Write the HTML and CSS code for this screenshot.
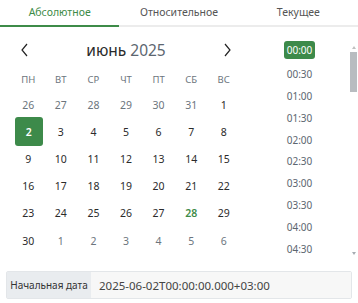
FILE: index.html
```html
<!DOCTYPE html>
<html lang="ru">
<head>
  <meta charset="UTF-8">
  <title>Выбор даты</title>
  <link rel="stylesheet" href="styles.css">
</head>
<body>
  <div class="tabs">
    <div class="tab active">Абсолютное</div>
    <div class="tab">Относительное</div>
    <div class="tab">Текущее</div>
  </div>

  <div class="picker">
    <div class="calendar">
      <div class="cal-header">
        <span class="nav">
          <svg width="9" height="14" viewBox="0 0 9 14"><path d="M7 1 L2 7 L7 13" fill="none" stroke="#222" stroke-width="1.2"/></svg>
        </span>
        <span class="month">июнь <span class="year">2025</span></span>
        <span class="nav">
          <svg width="9" height="14" viewBox="0 0 9 14"><path d="M2 1 L7 7 L2 13" fill="none" stroke="#222" stroke-width="1.2"/></svg>
        </span>
      </div>
      <div class="weekdays">
        <span>ПН</span><span>ВТ</span><span>СР</span><span>ЧТ</span><span>ПТ</span><span>СБ</span><span>ВС</span>
      </div>
      <div class="days">
        <span class="other">26</span><span class="other">27</span><span class="other">28</span><span class="other">29</span><span class="other">30</span><span class="other">31</span><span>1</span>
        <span><b class="selected">2</b></span><span>3</span><span>4</span><span>5</span><span>6</span><span>7</span><span>8</span>
        <span>9</span><span>10</span><span>11</span><span>12</span><span>13</span><span>14</span><span>15</span>
        <span>16</span><span>17</span><span>18</span><span>19</span><span>20</span><span>21</span><span>22</span>
        <span>23</span><span>24</span><span>25</span><span>26</span><span>27</span><span class="today">28</span><span>29</span>
        <span>30</span><span class="other">1</span><span class="other">2</span><span class="other">3</span><span class="other">4</span><span class="other">5</span><span class="other">6</span>
      </div>
    </div>

    <div class="times">
      <div class="time selected">00:00</div>
      <div class="time">00:30</div>
      <div class="time">01:00</div>
      <div class="time">01:30</div>
      <div class="time">02:00</div>
      <div class="time">02:30</div>
      <div class="time">03:00</div>
      <div class="time">03:30</div>
      <div class="time">04:00</div>
      <div class="time">04:30</div>
    </div>

    <div class="scrollbar">
      <span class="arrow up"></span>
      <div class="track"><div class="thumb"></div></div>
      <span class="arrow down"></span>
    </div>
  </div>

  <div class="date-field">
    <div class="label">Начальная дата</div>
    <div class="value">2025-06-02T00:00:00.000+03:00</div>
  </div>
</body>
</html>
```

FILE: styles.css
```css
body {
  margin: 0;
  width: 358px;
  height: 303px;
  overflow: hidden;
  background-color: #fff;
  font-family: "Noto Sans", "Open Sans", sans-serif;
  color: #212529;
}

.tabs {
  display: grid;
  grid-template-columns: repeat(3, 1fr);
  border-bottom: 2px solid #ececec;
}

.tab {
  height: 25px;
  line-height: 25px;
  text-align: center;
  font-size: 10.5px;
  color: #555;
  margin-bottom: -2px;
  border-bottom: 2px solid transparent;
}

.tab.active {
  color: #3d8b48;
  border-bottom-color: #3d8b48;
}

.picker {
  display: flex;
  height: 243px;
}

.calendar {
  width: 228px;
  margin-left: 12px;
  padding-top: 10px;
}

.cal-header {
  display: flex;
  align-items: center;
  justify-content: space-between;
  height: 26px;
  padding: 0 8px;
}

.nav {
  display: flex;
  width: 9px;
  height: 14px;
}

.month {
  font-size: 15.5px;
  color: #2a2a2a;
}

.year {
  color: #5c6670;
}

.weekdays {
  display: grid;
  grid-template-columns: repeat(7, 1fr);
  margin-top: 6px;
  height: 22px;
  line-height: 22px;
  text-align: center;
  font-size: 9.5px;
  color: #6c757d;
}

.days {
  display: grid;
  grid-template-columns: repeat(7, 1fr);
  grid-auto-rows: 27.2px;
  font-size: 10.5px;
  color: #2b2b2b;
}

.days span {
  display: flex;
  align-items: center;
  justify-content: center;
}

.days .other {
  color: #6c757d;
}

.days .today {
  color: #3d8b48;
  font-weight: 600;
}

.selected {
  background-color: #3d8a4a;
  color: #fff;
  border-radius: 3px;
}

.days .selected {
  display: flex;
  align-items: center;
  justify-content: center;
  width: 28px;
  height: 29px;
  margin-left: 1px;
  font-weight: 600;
}

.times {
  width: 31px;
  margin-left: 44px;
  padding-top: 14px;
  overflow: hidden;
  height: 222px;
}

.time {
  height: 21.9px;
  display: flex;
  align-items: center;
  justify-content: center;
  font-size: 10px;
  color: #5c6670;
}

.time.selected {
  height: 18px;
  margin-bottom: 3.9px;
  color: #fff;
}

.scrollbar {
  display: flex;
  flex-direction: column;
  align-items: center;
  width: 7px;
  margin-left: 35px;
  padding-top: 19px;
  height: 209px;
}

.track {
  flex: 1;
  width: 7px;
  padding-top: 3px;
}

.thumb {
  width: 7px;
  height: 40px;
  background-color: #b8bcc0;
}

.arrow {
  width: 0;
  height: 0;
  border-left: 2.5px solid transparent;
  border-right: 2.5px solid transparent;
}

.arrow.up {
  border-bottom: 3px solid #c0c0c0;
}

.arrow.down {
  border-top: 3px solid #a6acb2;
}

.date-field {
  display: flex;
  margin: 1px 6px 0 6px;
  height: 28px;
  border: 1px solid #e3e6e9;
  border-radius: 2px;
  box-sizing: border-box;
}

.label {
  width: 84px;
  background-color: #e9ecef;
  font-size: 10px;
  color: #333;
  display: flex;
  align-items: center;
  justify-content: center;
}

.value {
  flex: 1;
  background-color: #f7f7f7;
  font-size: 11.5px;
  color: #444;
  display: flex;
  align-items: center;
  padding-left: 8px;
}
```
